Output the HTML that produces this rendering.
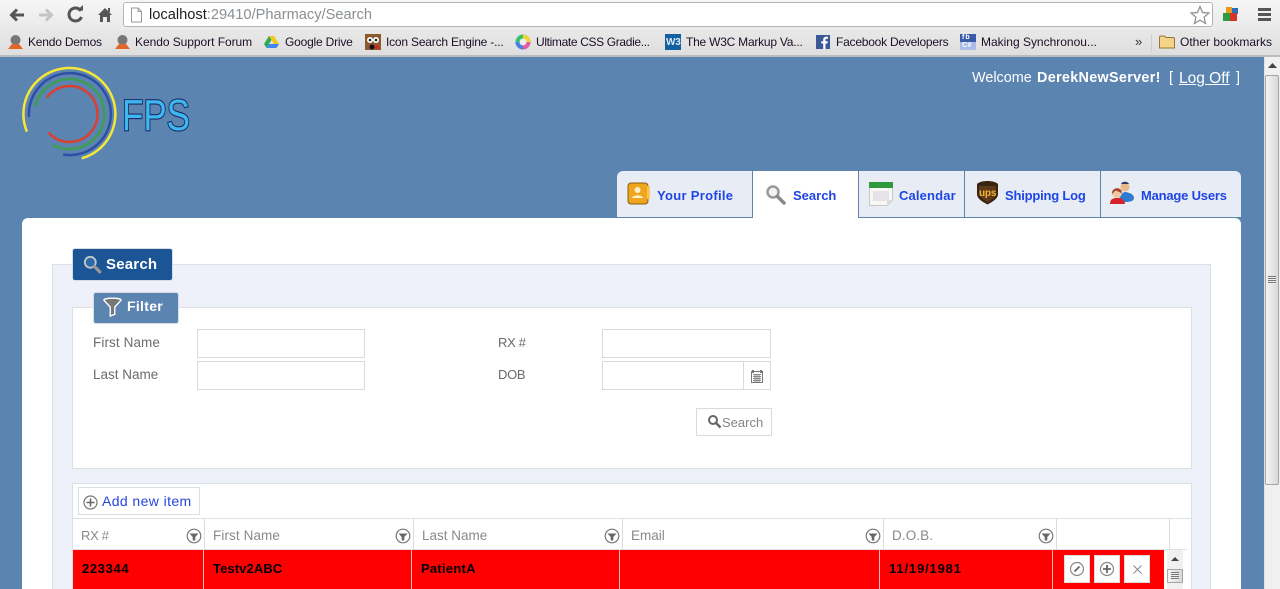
<!DOCTYPE html>
<html lang="en">
<head>
<meta charset="utf-8">
<title>Pharmacy Search</title>
<style>
html,body{margin:0;padding:0;width:1280px;height:589px;overflow:hidden;background:#5b84b1;font-family:"Liberation Sans",sans-serif;}
div,span,a,svg{position:absolute;display:block;white-space:nowrap;}
svg{overflow:visible;}
a{text-decoration:none;}
.bm{top:35px;font-size:12px;line-height:14px;color:#1c0f26;}
.lbl{font-size:13.5px;line-height:16px;color:#6b6b70;letter-spacing:.1px;}
.inp{background:#fff;border:1px solid #dadada;box-sizing:border-box;height:29px;}
.tab{top:171px;height:46px;background:#e8edf5;border-bottom:1px solid #5b84b1;box-sizing:content-box;}
.tt{top:188px;font-size:13px;font-weight:bold;line-height:16px;color:#1f45e6;}
.th{top:528px;font-size:13.5px;line-height:16px;color:#868a8e;}
.td{top:561px;font-size:13px;font-weight:bold;line-height:16px;color:#000;}
.vs{background:#dcdcdc;width:1px;}
.rs{background:#ffb9b9;width:1px;top:550px;height:39px;}
.act{top:555px;width:26px;height:28px;background:#fff;border:1px solid #ddd;box-sizing:border-box;}
</style>
</head>
<body>
<!-- browser chrome -->
<div style="left:0;top:0;width:1280px;height:30px;background:linear-gradient(#f6f6f6,#e9e9e9);"></div>
<div style="left:0;top:30px;width:1280px;height:26px;background:linear-gradient(#e8e8e8,#dedede);"></div>
<div style="left:0;top:55px;width:1280px;height:2px;background:#b9bcc0;"></div>

<svg style="left:0;top:0" width="125" height="30" viewBox="0 0 125 30">
<path d="M24 15H12M17 9.500L11.500 15L17 20.500" fill="none" stroke="#555" stroke-width="3"/>
<path d="M39 15H51M46 9.500L51.500 15L46 20.500" fill="none" stroke="#c4c4c4" stroke-width="3"/>
<path d="M81 11A6.500 6.500 0 1 0 81.500 17" fill="none" stroke="#555" stroke-width="3"/>
<path d="M77 10.500H83V5Z" fill="#555"/>
<path d="M98 15L105 8L112 15H110V22H107V17H103V22H100V15Z" fill="#555"/><rect x="108" y="8" width="2" height="4" fill="#555"/>
</svg>

<div style="left:123px;top:2px;width:1090px;height:25px;background:#fff;border:1px solid #b4b4b4;border-radius:3px;box-sizing:border-box;"></div>
<svg style="left:130px;top:7px" width="13" height="16" viewBox="0 0 13 16"><path d="M1.500 1H8L11.500 4.500V15H1.500Z" fill="#fff" stroke="#9a9a9a"/><path d="M8 1V4.500H11.500" fill="none" stroke="#9a9a9a"/></svg>
<div style="left:149px;top:6px;font-size:14.65px;line-height:18px;color:#8a8f93;"><span style="position:static;display:inline;color:#1e1e1e">localhost</span>:29410/Pharmacy/Search</div>
<svg style="left:1190px;top:5px" width="20" height="20" viewBox="0 0 20 20"><path d="M10 1.500L12.500 7.500L19 8L14 12.200L15.600 18.500L10 15.100L4.400 18.500L6 12.200L1 8L7.500 7.500Z" fill="#fff" stroke="#8c8c8c" stroke-width="1.200"/></svg>
<svg style="left:1223px;top:7px" width="16" height="15" viewBox="0 0 16 15"><rect x="0" y="6" width="7" height="8" fill="#2f9a3e"/><rect x="3" y="0" width="6" height="6" fill="#e99a1e"/><rect x="9" y="1" width="6" height="6" fill="#2a6fb8"/><rect x="7" y="6" width="7" height="8" fill="#d6332a"/></svg>
<svg style="left:1258px;top:8px" width="13" height="13" viewBox="0 0 13 13"><rect width="13" height="3" y="0" fill="#555"/><rect width="13" height="3" y="5" fill="#555"/><rect width="13" height="3" y="10" fill="#555"/></svg>

<!-- bookmarks -->
<svg style="left:8px;top:34px" width="15" height="16" viewBox="0 0 15 16"><circle cx="7.500" cy="6" r="5" fill="#777"/><path d="M0 15L4 10H11L15 15Z" fill="#e2662a"/></svg>
<a class="bm" style="left:28px;letter-spacing:-.2px">Kendo Demos</a>
<svg style="left:115px;top:34px" width="15" height="16" viewBox="0 0 15 16"><circle cx="7.500" cy="6" r="5" fill="#777"/><path d="M0 15L4 10H11L15 15Z" fill="#e2662a"/></svg>
<a class="bm" style="left:135px;letter-spacing:-.05px">Kendo Support Forum</a>
<svg style="left:264px;top:35px" width="15" height="14" viewBox="0 0 15 14"><path d="M5 1H10L15 9H10Z" fill="#f5c518"/><path d="M5 1L0 9L2.500 13L7.500 5Z" fill="#2da94f"/><path d="M2.500 13H12.500L15 9H5Z" fill="#4285f4"/></svg>
<a class="bm" style="left:285px;letter-spacing:-.2px">Google Drive</a>
<svg style="left:365px;top:34px" width="16" height="16" viewBox="0 0 16 16"><rect width="16" height="16" fill="#8c5a2c"/><circle cx="5" cy="6" r="3" fill="#fff"/><circle cx="11" cy="6" r="3" fill="#fff"/><circle cx="5" cy="6" r="1.300" fill="#222"/><circle cx="11" cy="6" r="1.300" fill="#222"/><circle cx="7" cy="13" r="2.500" fill="#111"/><circle cx="12" cy="13" r="2" fill="#d8222a"/></svg>
<a class="bm" style="left:386px;letter-spacing:-.2px">Icon Search Engine -...</a>
<svg style="left:515px;top:34px" width="16" height="16" viewBox="0 0 16 16"><circle cx="8" cy="8" r="7.500" fill="#35c46a"/><path d="M8 8L8 .5A7.500 7.500 0 0 1 15.500 8Z" fill="#f2d23c"/><path d="M8 8L15.500 8A7.500 7.500 0 0 1 8 15.500Z" fill="#e85a9c"/><path d="M8 8L8 15.500A7.500 7.500 0 0 1 .5 8Z" fill="#4a7de8"/><circle cx="8" cy="8" r="3.500" fill="#eee"/></svg>
<a class="bm" style="left:536px;letter-spacing:-.35px">Ultimate CSS Gradie...</a>
<svg style="left:665px;top:34px" width="16" height="16" viewBox="0 0 16 16"><rect width="16" height="16" fill="#145fa0"/></svg>
<a style="left:666px;top:37px;font-size:10px;line-height:11px;font-weight:bold;color:#dbe9f5;letter-spacing:-.2px">W3</a>
<a class="bm" style="left:686px;letter-spacing:-.23px">The W3C Markup Va...</a>
<svg style="left:816px;top:35px" width="14" height="14" viewBox="0 0 14 14"><rect width="14" height="14" fill="#3b5998"/><path d="M9.500 14V8.500H11.500L11.800 6.300H9.500V5C9.500 4.200 9.800 3.800 10.700 3.800H12V1.800C11.500 1.700 10.800 1.700 10.200 1.700C8.300 1.700 7.200 2.800 7.200 4.700V6.300H5.300V8.500H7.200V14Z" fill="#fff"/></svg>
<a class="bm" style="left:836px;letter-spacing:-.23px">Facebook Developers</a>
<svg style="left:960px;top:34px" width="16" height="16" viewBox="0 0 16 16"><rect width="16" height="8" fill="#3a5ca8"/><rect y="8" width="16" height="8" fill="#a9bde6"/></svg>
<a style="left:962px;top:34px;font-size:7px;line-height:8px;color:#fff;font-weight:bold;letter-spacing:1px">fb</a>
<a style="left:962px;top:42px;font-size:7px;line-height:8px;color:#fff;font-weight:bold;letter-spacing:.5px">C#</a>
<a class="bm" style="left:981px;letter-spacing:-.01px">Making Synchronou...</a>
<a class="bm" style="left:1135px;top:35px;font-size:13px;color:#333;">»</a>
<div style="left:1151px;top:34px;width:1px;height:18px;background:#cfcfcf;"></div>
<svg style="left:1159px;top:35px" width="16" height="14" viewBox="0 0 16 14"><path d="M.5 13V2.500C.5 1.500 1 1 2 1H5.500L7 2.500H14C15 2.500 15.500 3 15.500 4V13Z" fill="#f5d48a" stroke="#9a7433"/></svg>
<a class="bm" style="left:1180px;">Other bookmarks</a>

<!-- window scrollbar -->
<div style="left:1264px;top:57px;width:16px;height:532px;background:#f0f0f0;border-left:1px solid #e2e2e2;box-sizing:border-box;"></div>
<svg style="left:1268px;top:63px" width="9" height="5" viewBox="0 0 9 5"><path d="M0 5L4.500 0L9 5Z" fill="#444"/></svg>
<div style="left:1265px;top:75px;width:14px;height:410px;box-sizing:border-box;border:1px solid #a6a6a6;border-radius:2px;background:linear-gradient(90deg,#f4f4f4,#d8d8d8);"></div>
<div style="left:1268px;top:276px;width:8px;height:8px;background:repeating-linear-gradient(#777 0 1px,#eee 1px 2px);"></div>

<!-- header -->
<svg style="left:20px;top:65px" width="175" height="100" viewBox="20 65 175 100">
<g fill="none" stroke-width="2.500" stroke-linecap="butt">
<path d="M26.900 131.600A46 46 0 1 1 81.800 158.300" stroke="#f4e63a"/>
<path d="M29 117A41 41 0 1 1 63.100 154.500" stroke="#2f4ea6"/>
<path d="M35.200 106.800A35 35 0 1 1 52.600 144.700" stroke="#3f9c54"/>
<path d="M46.800 97.600A28 28 0 1 1 48.500 132.500" stroke="#d9402f"/>
</g>
<text x="122" y="130" font-family="Liberation Sans,sans-serif" font-size="44" fill="#3db8ee" stroke="#1b2c68" stroke-width="2.200" paint-order="stroke" textLength="68" lengthAdjust="spacingAndGlyphs">FPS</text>
</svg>

<div style="left:972px;top:70px;font-size:14.4px;line-height:17px;color:#fff;font-weight:500;">Welcome</div>
<div style="left:1037px;top:70px;font-size:14.4px;line-height:17px;color:#fff;font-weight:bold;letter-spacing:.3px">DerekNewServer!</div>
<div style="left:1169px;top:70px;font-size:14.4px;line-height:17px;color:#fff;">[</div>
<a style="left:1179px;top:70px;font-size:15.5px;line-height:17px;color:#fff;text-decoration:underline;">Log Off</a>
<div style="left:1236px;top:70px;font-size:14.4px;line-height:17px;color:#fff;">]</div>

<!-- main panel -->
<div style="left:22px;top:218px;width:1219px;height:371px;background:#fff;border-radius:6px 6px 0 0;"></div>

<!-- tabs -->
<div class="tab" style="left:617px;width:135px;border-radius:6px 0 0 0;"></div>
<div style="left:752px;top:171px;width:1px;height:47px;background:#5b84b1;"></div>
<div style="left:753px;top:171px;width:105px;height:47px;background:#fff;"></div>
<div style="left:858px;top:171px;width:1px;height:47px;background:#5b84b1;"></div>
<div class="tab" style="left:859px;width:105px;"></div>
<div style="left:964px;top:171px;width:1px;height:47px;background:#5b84b1;"></div>
<div class="tab" style="left:965px;width:135px;"></div>
<div style="left:1100px;top:171px;width:1px;height:47px;background:#5b84b1;"></div>
<div class="tab" style="left:1101px;width:140px;border-radius:0 6px 0 0;"></div>

<svg style="left:627px;top:181px" width="24" height="24" viewBox="0 0 24 24"><rect x="1" y="2" width="20" height="21" rx="3" fill="#f0a51e" stroke="#8a5a14"/><rect x="20" y="5" width="3" height="13" rx="1" fill="#f7c65a"/><circle cx="10.500" cy="9" r="3" fill="#fff1c8"/><path d="M5 17C5 13.500 16 13.500 16 17Z" fill="#fff1c8"/></svg>
<a class="tt" style="left:657px;letter-spacing:.3px">Your Profile</a>
<svg style="left:765px;top:184px" width="22" height="22" viewBox="0 0 22 22"><circle cx="8" cy="8" r="5.500" fill="#f2f2f2" stroke="#999" stroke-width="2.500"/><path d="M12.500 12.500L19 19" stroke="#8a8a8a" stroke-width="3.500" stroke-linecap="round"/></svg>
<a class="tt" style="left:793px;">Search</a>
<svg style="left:869px;top:181px" width="24" height="25" viewBox="0 0 24 25"><path d="M.5 2H23.500V19L18 24.500H.5Z" fill="#f8f8f4" stroke="#c8c8c8"/><rect x="0" y="1" width="24" height="6" fill="#2f9a3c"/><path d="M4 10H20V20H4Z" fill="#e6e2ea"/><path d="M18 24.500V19H23.500Z" fill="#dcdcdc"/></svg>
<a class="tt" style="left:899px;letter-spacing:.15px">Calendar</a>
<svg style="left:976px;top:181px" width="23" height="24" viewBox="0 0 23 24"><path d="M11.500 0C7 0 3 1 1 3V13C1 18 7 21 11.500 23.500C16 21 22 18 22 13V3C20 1 16 0 11.500 0Z" fill="#3a2412"/><path d="M3 5H20V13C20 16 15 19 11.500 21C8 19 3 16 3 13Z" fill="#5d3a1c"/></svg>
<span style="left:979px;top:188px;font-size:10px;line-height:11px;font-weight:bold;color:#f2b632;letter-spacing:-.2px">ups</span>
<a class="tt" style="left:1005px;letter-spacing:-.2px">Shipping Log</a>
<svg style="left:1110px;top:181px" width="26" height="24" viewBox="0 0 26 24"><circle cx="15" cy="6" r="4.500" fill="#e8b98a"/><path d="M11 3C12 0 18 0 19 3Z" fill="#2a3a6a"/><path d="M9 21C9 13 14 11 15 11C16 11 24 12 24 17C24 20 20 21 16 21Z" fill="#2f7bd0"/><circle cx="7" cy="12" r="5" fill="#f0c7a2"/><path d="M2 13C1 6 12 5 12 12C9 11 6 9 5 10Z" fill="#a8482a"/><path d="M0 23C0 18 3 17 7 17C11 17 15 18 15 23Z" fill="#d6252a"/></svg>
<a class="tt" style="left:1141px;letter-spacing:-.2px">Manage Users</a>

<!-- search fieldset -->
<div style="left:52px;top:264px;width:1159px;height:325px;background:#eef1fa;border:1px solid #dcdfe4;border-bottom:0;box-sizing:border-box;"></div>
<div style="left:72px;top:248px;width:101px;height:33px;background:#1c5596;border:1px solid #d8dce2;border-radius:3px;box-sizing:border-box;"></div>
<svg style="left:83px;top:255px" width="20" height="20" viewBox="0 0 22 22"><circle cx="8" cy="8" r="6" fill="#2c6aaa" stroke="#c4c8cc" stroke-width="2"/><path d="M12.500 12.500L18.500 18.500" stroke="#9a9a9a" stroke-width="3.500" stroke-linecap="round"/></svg>
<div style="left:106px;top:256px;font-size:15px;line-height:18px;font-weight:bold;color:#fff;letter-spacing:.2px">Search</div>

<!-- filter fieldset -->
<div style="left:72px;top:307px;width:1120px;height:162px;background:#fff;border:1px solid #dcdfe4;box-sizing:border-box;"></div>
<div style="left:93px;top:292px;width:86px;height:32px;background:#5b84b1;border:1px solid #d8dce2;border-radius:3px;box-sizing:border-box;"></div>
<svg style="left:103px;top:297px" width="19" height="20" viewBox="0 0 21 22"><path d="M1 3.500C1 .5 20 .5 20 3.500L13 11V19L8 21V11Z" fill="#777" stroke="#fff" stroke-width="1.500"/></svg>
<div style="left:127px;top:298px;font-size:14px;line-height:17px;font-weight:bold;color:#fff;letter-spacing:.3px">Filter</div>

<div class="lbl" style="left:93px;top:335px;">First Name</div>
<div class="lbl" style="left:93px;top:367px;letter-spacing:0">Last Name</div>
<div class="lbl" style="left:498px;top:335px;font-size:13px;letter-spacing:-.3px">RX #</div>
<div class="lbl" style="left:498px;top:367px;font-size:13px;letter-spacing:-.3px">DOB</div>
<div class="inp" style="left:197px;top:329px;width:168px;"></div>
<div class="inp" style="left:197px;top:361px;width:168px;"></div>
<div class="inp" style="left:602px;top:329px;width:169px;"></div>
<div class="inp" style="left:602px;top:361px;width:169px;"></div>
<div style="left:743px;top:361px;width:1px;height:29px;background:#dadada;"></div>
<svg style="left:751px;top:370px" width="12" height="13" viewBox="0 0 12 13"><rect x=".5" y="1.500" width="11" height="11" fill="#fff" stroke="#777"/><rect x="1" y="0" width="2" height="3" fill="#777"/><rect x="9" y="0" width="2" height="3" fill="#777"/><path d="M2 4.500H10M2 6.500H10M2 8.500H10M2 10.500H10M4 4V12M6 4V12M8 4V12" stroke="#888" stroke-width="1"/></svg>

<div style="left:696px;top:408px;width:76px;height:28px;background:#fff;border:1px solid #dadada;box-sizing:border-box;"></div>
<svg style="left:707px;top:414px" width="15" height="15" viewBox="0 0 15 15"><circle cx="6" cy="6" r="4" fill="none" stroke="#666" stroke-width="2"/><path d="M9 9L13.500 13.500" stroke="#666" stroke-width="2.500"/></svg>
<div style="left:722px;top:415px;font-size:13px;line-height:16px;color:#858585;">Search</div>

<!-- grid -->
<div style="left:72px;top:483px;width:1120px;height:106px;background:#fff;border:1px solid #dcdfe4;border-bottom:0;box-sizing:border-box;"></div>
<div style="left:78px;top:487px;width:122px;height:28px;background:#fff;border:1px solid #dcdfe4;box-sizing:border-box;"></div>
<svg style="left:83px;top:495px" width="15" height="15" viewBox="0 0 15 15"><circle cx="7.500" cy="7.500" r="6.500" fill="none" stroke="#777" stroke-width="1.200"/><path d="M3.500 7.500H11.500M7.500 3.500V11.500" stroke="#666" stroke-width="1.600"/></svg>
<a style="left:102px;top:493px;font-size:14px;line-height:17px;color:#2645e0;letter-spacing:.4px">Add new item</a>
<div style="left:73px;top:518px;width:1118px;height:1px;background:#dcdfe4;"></div>
<div style="left:73px;top:549px;width:1114px;height:1px;background:#dcdfe4;"></div>
<div class="vs" style="left:204px;top:519px;height:30px;"></div>
<div class="vs" style="left:413px;top:519px;height:30px;"></div>
<div class="vs" style="left:622px;top:519px;height:30px;"></div>
<div class="vs" style="left:883px;top:519px;height:30px;"></div>
<div class="vs" style="left:1056px;top:519px;height:30px;"></div>
<div class="vs" style="left:1169px;top:519px;height:30px;"></div>

<div class="th" style="left:81px;font-size:13px;letter-spacing:-.3px">RX #</div>
<div class="th" style="left:213px;letter-spacing:.1px">First Name</div>
<div class="th" style="left:422px;">Last Name</div>
<div class="th" style="left:631px;">Email</div>
<div class="th" style="left:892px;letter-spacing:.1px">D.O.B.</div>
<svg style="left:186px;top:528px" width="16" height="16" viewBox="0 0 16 16"><circle cx="8" cy="8" r="6.800" fill="#fff" stroke="#777" stroke-width="1.200"/><path d="M3.500 5.500H12.500L9.300 9V12.500H6.700V9Z" fill="#666"/></svg>
<svg style="left:395px;top:528px" width="16" height="16" viewBox="0 0 16 16"><circle cx="8" cy="8" r="6.800" fill="#fff" stroke="#777" stroke-width="1.200"/><path d="M3.500 5.500H12.500L9.300 9V12.500H6.700V9Z" fill="#666"/></svg>
<svg style="left:604px;top:528px" width="16" height="16" viewBox="0 0 16 16"><circle cx="8" cy="8" r="6.800" fill="#fff" stroke="#777" stroke-width="1.200"/><path d="M3.500 5.500H12.500L9.300 9V12.500H6.700V9Z" fill="#666"/></svg>
<svg style="left:865px;top:528px" width="16" height="16" viewBox="0 0 16 16"><circle cx="8" cy="8" r="6.800" fill="#fff" stroke="#777" stroke-width="1.200"/><path d="M3.500 5.500H12.500L9.300 9V12.500H6.700V9Z" fill="#666"/></svg>
<svg style="left:1038px;top:528px" width="16" height="16" viewBox="0 0 16 16"><circle cx="8" cy="8" r="6.800" fill="#fff" stroke="#777" stroke-width="1.200"/><path d="M3.500 5.500H12.500L9.300 9V12.500H6.700V9Z" fill="#666"/></svg>

<div style="left:73px;top:550px;width:1091px;height:39px;background:#f00;"></div>
<div class="rs" style="left:203px;"></div>
<div class="rs" style="left:411px;"></div>
<div class="rs" style="left:619px;"></div>
<div class="rs" style="left:879px;"></div>
<div class="rs" style="left:1052px;"></div>
<div class="td" style="left:82px;letter-spacing:.65px">223344</div>
<div class="td" style="left:213px;letter-spacing:.1px">Testv2ABC</div>
<div class="td" style="left:421px;letter-spacing:.25px">PatientA</div>
<div class="td" style="left:889px;letter-spacing:.85px">11/19/1981</div>

<div class="act" style="left:1064px;"></div>
<svg style="left:1069px;top:561px" width="16" height="16" viewBox="0 0 16 16"><circle cx="8" cy="8" r="6.500" fill="none" stroke="#888" stroke-width="1.200"/><path d="M5.500 10.500L10.500 5.500" stroke="#666" stroke-width="1.800"/></svg>
<div class="act" style="left:1094px;"></div>
<svg style="left:1099px;top:561px" width="16" height="16" viewBox="0 0 16 16"><circle cx="8" cy="8" r="6.500" fill="none" stroke="#888" stroke-width="1.200"/><path d="M4 8H12M8 4V12" stroke="#666" stroke-width="1.800"/></svg>
<div class="act" style="left:1124px;"></div>
<svg style="left:1132px;top:564px" width="11" height="11" viewBox="0 0 11 11"><path d="M1.500 1.500L9.500 9.500M9.500 1.500L1.500 9.500" stroke="#888" stroke-width="1"/></svg>

<div style="left:1167px;top:550px;width:16px;height:39px;background:#f0f0f0;"></div>
<svg style="left:1171px;top:557px" width="8" height="4" viewBox="0 0 8 4"><path d="M0 4L4 0L8 4Z" fill="#444"/></svg>
<div style="left:1167px;top:569px;width:16px;height:14px;background:linear-gradient(90deg,#f4f4f4,#d8d8d8);border:1px solid #a6a6a6;box-sizing:border-box;border-radius:1px;"></div>
<div style="left:1171px;top:572px;width:8px;height:8px;background:repeating-linear-gradient(#777 0 1px,#eee 1px 2px);"></div>
</body>
</html>
